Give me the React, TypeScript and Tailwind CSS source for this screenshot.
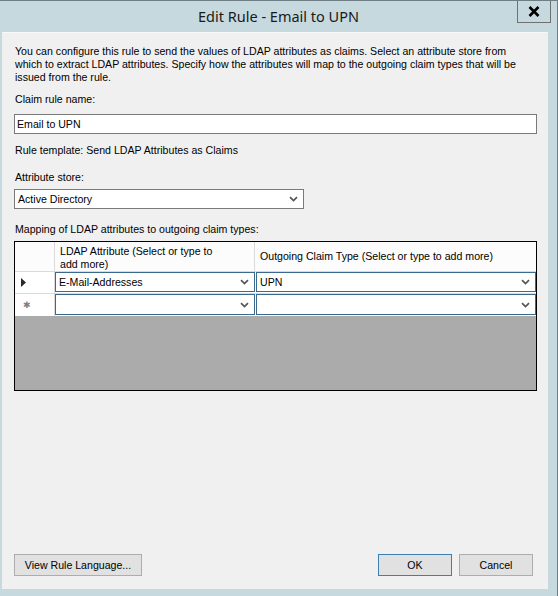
import React from "react";

const Chevron = () => (
  <svg width="9" height="6" viewBox="0 0 9 6" className="shrink-0">
    <path d="M1 1.2 L4.5 4.6 L8 1.2" stroke="#555" strokeWidth="1.7" fill="none" />
  </svg>
);

const Combo = ({ text, className = "" }: { text: string; className?: string }) => (
  <div className={`flex items-center justify-between bg-white border border-[#3b6a8f] h-full pl-[3px] pr-[5px] ${className}`}>
    <span className="whitespace-nowrap">{text}</span>
    <Chevron />
  </div>
);

export default function App() {
  return (
    <div className="w-[558px] h-[596px] bg-[#c6d9df] flex flex-col border-t border-r border-[#6f7f86] font-['Liberation_Sans',Arial,sans-serif] text-[10.6px] tracking-normal text-black leading-[13px] overflow-hidden">
      {/* Title bar */}
      <div className="relative h-[31px] shrink-0 flex items-center justify-center">
        <span className="font-['Noto_Sans',sans-serif] text-[14.5px] tracking-normal text-[#1a1a1a] -mt-[1px]">
          Edit Rule - Email to UPN
        </span>
        <div className="absolute -top-px right-[6px] w-[34px] h-[23px] border border-[#707070] flex items-center justify-center">
          <svg width="12" height="11" viewBox="0 0 12 11">
            <path d="M1.5 1 L10.5 10 M10.5 1 L1.5 10" stroke="#000" strokeWidth="2.6" />
          </svg>
        </div>
      </div>

      {/* Content */}
      <div className="ml-[2px] w-[546px] mb-[7px] flex-1 bg-[#f0f0f0] border-t border-[#f8f8f8] flex flex-col pl-[12px] pr-[11px] pt-[12px]">
        <p className="pl-px">
          You can configure this rule to send the values of LDAP attributes as claims. Select an attribute store from
          <br />
          which to extract LDAP attributes. Specify how the attributes will map to the outgoing claim types that will be
          <br />
          issued from the rule.
        </p>
        <div className="mt-[9px] pl-px">Claim rule name:</div>
        <div className="mt-[8px] h-[20px] bg-white border border-[#7a7a7a] flex items-center pl-[2px]">Email to UPN</div>
        <div className="mt-[10px] pl-px">Rule template: Send LDAP Attributes as Claims</div>
        <div className="mt-[14px] pl-px">Attribute store:</div>
        <div className="mt-[5px] h-[20px] w-[290px] bg-white border border-[#7a7a7a] flex items-center justify-between pl-[3px] pr-[5px]">
          <span>Active Directory</span>
          <Chevron />
        </div>
        <div className="mt-[14px] pl-px">Mapping of LDAP attributes to outgoing claim types:</div>

        {/* Grid */}
        <div className="mt-[5px] h-[150px] border border-black bg-[#ababab] flex flex-col">
          {/* Header */}
          <div className="flex h-[30px] bg-[#fcfcfc]">
            <div className="w-[40px] border-r border-b border-[#dadada]" />
            <div className="w-[200px] border-r border-b border-[#dadada] pl-[5px] pt-[3px]">
              LDAP Attribute (Select or type to
              <br />
              add more)
            </div>
            <div className="flex-1 border-b border-[#dadada] pl-[5px] flex items-center">
              Outgoing Claim Type (Select or type to add more)
            </div>
          </div>
          {/* Row 1 */}
          <div className="flex h-[22px] bg-white">
            <div className="w-[40px] border-r border-b border-[#dadada] flex items-center pl-[6px]">
              <svg width="5" height="9" viewBox="0 0 5 9">
                <path d="M0 0 L5 4.5 L0 9 Z" fill="#2b2b2b" />
              </svg>
            </div>
            <div className="w-[200px] border-b border-[#dadada] pb-px">
              <Combo text="E-Mail-Addresses" />
            </div>
            <div className="flex-1 border-b border-[#dadada] pl-px pb-px">
              <Combo text="UPN" />
            </div>
          </div>
          {/* Row 2 */}
          <div className="flex h-[22px] bg-white">
            <div className="w-[40px] border-r border-[#dadada] flex items-center pl-[8px]">
              <span className="text-[#808080] text-[9px] leading-none">✱</span>
            </div>
            <div className="w-[200px] pb-px">
              <Combo text="" />
            </div>
            <div className="flex-1 pl-px pb-px">
              <Combo text="" />
            </div>
          </div>
        </div>

        {/* Buttons */}
        <div className="mt-auto mb-[13px] flex items-center">
          <button className="h-[22px] w-[128px] bg-[#e1e1e1] border border-[#adadad] flex items-center justify-center">
            View Rule Language...
          </button>
          <div className="flex-1" />
          <button className="h-[22px] w-[74px] bg-[#e1e1e1] border border-[#3c7fb1] flex items-center justify-center">
            OK
          </button>
          <button className="ml-[7px] mr-[4px] h-[22px] w-[74px] bg-[#e1e1e1] border border-[#adadad] flex items-center justify-center">
            Cancel
          </button>
        </div>
      </div>
    </div>
  );
}
